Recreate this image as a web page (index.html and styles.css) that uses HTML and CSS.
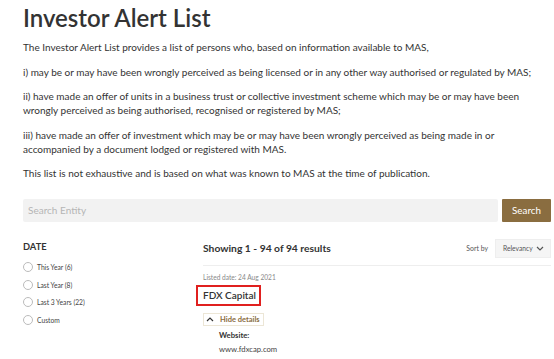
FILE: index.html
```html
<!DOCTYPE html>
<html>
<head>
<meta charset="utf-8">
<link rel="stylesheet" href="styles.css">
</head>
<body>
<div class="page">
  <h1 class="title">Investor Alert List</h1>
  <p class="para">The Investor Alert List provides a list of persons who, based on information available to MAS,</p>
  <p class="para">i) may be or may have been wrongly perceived as being licensed or in any other way authorised or regulated by MAS;</p>
  <p class="para">ii) have made an offer of units in a business trust or collective investment scheme which may be or may have been wrongly perceived as being authorised, recognised or registered by MAS;</p>
  <p class="para">iii) have made an offer of investment which may be or may have been wrongly perceived as being made in or accompanied by a document lodged or registered with MAS.</p>
  <p class="para">This list is not exhaustive and is based on what was known to MAS at the time of publication.</p>

  <div class="search-row">
    <div class="search-input">Search Entity</div>
    <div class="search-btn">Search</div>
  </div>

  <div class="content">
    <aside class="sidebar">
      <div class="filter-title">DATE</div>
      <ul class="radios">
        <li class="radio"><span class="circle"></span>This Year (6)</li>
        <li class="radio"><span class="circle"></span>Last Year (8)</li>
        <li class="radio"><span class="circle"></span>Last 3 Years (22)</li>
        <li class="radio"><span class="circle"></span>Custom</li>
      </ul>
    </aside>
    <main class="results">
      <div class="results-head">
        <div class="showing">Showing 1 - 94 of 94 results</div>
        <div class="sort">
          <span class="sort-label">Sort by</span>
          <div class="sort-select"><span>Relevancy</span>
            <svg class="chev" width="8" height="5" viewBox="0 0 8 5"><path d="M1 1l3 3 3-3" fill="none" stroke="#555" stroke-width="1.2"/></svg>
          </div>
        </div>
      </div>
      <div class="item">
        <div class="listed">Listed date: 24 Aug 2021</div>
        <div class="name-wrap"><span class="name">FDX Capital</span></div>
        <div class="toggle">
          <svg width="8" height="5" viewBox="0 0 8 5"><path d="M1 4l3-3 3 3" fill="none" stroke="#333" stroke-width="1.2"/></svg>
          <span>Hide details</span>
        </div>
        <div class="details">
          <div class="dl">Website:</div>
          <div class="dd">www.fdxcap.com</div>
        </div>
      </div>
    </main>
  </div>
</div>
</body>
</html>
```
FILE: styles.css
```css
* { box-sizing: border-box; }
body {
  margin: 0;
  background: #fff;
  font-family: "Lato", "Open Sans", sans-serif;
  color: #333;
}
.page {
  padding: 3px 3px 0 23px;
}
.title {
  margin: 0 0 7px;
  font-size: 24px;
  font-weight: 600;
  line-height: 30px;
  color: #333;
}
.para {
  margin: 0 0 10.5px;
  font-size: 10px;
  line-height: 14px;
}
.search-row {
  display: flex;
  gap: 4px;
  margin-top: 18.5px;
  height: 23px;
  width: 528px;
}
.search-input {
  flex: 1;
  background: #f2f2f2;
  border-radius: 2px;
  font-size: 10px;
  color: #b5b5b5;
  padding-left: 5px;
  line-height: 23px;
}
.search-btn {
  width: 49px;
  background: #8a6d40;
  color: #fff;
  font-size: 9.8px;
  line-height: 23px;
  text-align: center;
  border-radius: 1px;
}
.content {
  display: flex;
  width: 528px;
  margin-top: 16px;
}
.sidebar {
  width: 180px;
}
.filter-title {
  font-size: 9.3px;
  font-weight: 700;
  line-height: 16px;
  margin-top: 1px;
}
.radios {
  list-style: none;
  margin: 4px 0 0;
  padding: 0;
}
.radio {
  display: flex;
  align-items: center;
  gap: 4px;
  height: 17.5px;
  font-size: 6.7px;
  color: #444;
}
.circle {
  width: 10px;
  height: 10px;
  border: 1px solid #bbb;
  border-radius: 50%;
}
.results {
  flex: 1;
}
.results-head {
  display: flex;
  justify-content: space-between;
  align-items: flex-start;
  padding: 1px 0 7px;
  border-bottom: 1px solid #eee;
}
.showing {
  font-size: 10.3px;
  font-weight: 700;
  line-height: 19px;
}
.sort {
  display: flex;
  align-items: center;
  gap: 7px;
}
.sort-label {
  font-size: 6.9px;
  color: #555;
}
.sort-select {
  display: flex;
  align-items: center;
  justify-content: space-between;
  width: 56px;
  height: 19px;
  padding: 0 6px 0 7px;
  background: #f5f5f5;
  border: 1px solid #eee;
  font-size: 6.7px;
  color: #555;
  white-space: nowrap;
}
.item {
  padding-top: 6px;
}
.listed {
  font-size: 6.6px;
  color: #888;
  line-height: 10px;
}
.name-wrap {
  margin: 1px 0 0 -7px;
}
.name {
  display: inline-block;
  border: 2px solid #e0201f;
  padding: 1px 3px 1px 5px;
  font-size: 10px;
  font-weight: 600;
  line-height: 15px;
}
.toggle {
  display: inline-flex;
  align-items: center;
  gap: 6px;
  margin-top: 7px;
  border: 1px solid #ece6d6;
  padding: 0 3px 0 2px;
  height: 13px;
  font-size: 7.5px;
  font-weight: 700;
  color: #8a6d40;
}
.details {
  padding-left: 16px;
  font-size: 7.7px;
  line-height: 14px;
}
.dl { font-weight: 700; margin-top: 2px; }
.dd { color: #444; }
```
